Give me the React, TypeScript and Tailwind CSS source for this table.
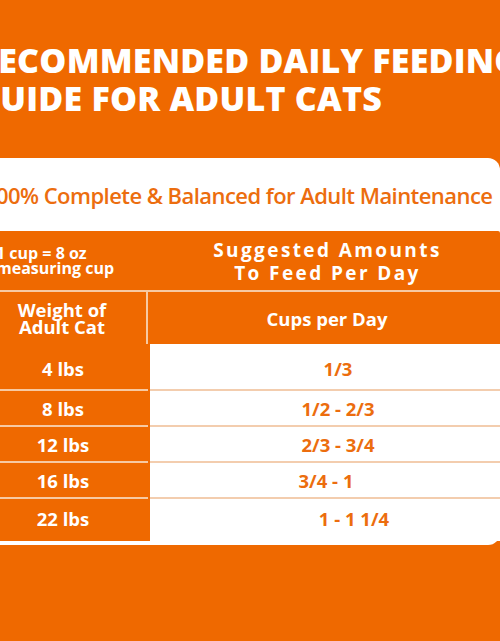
import React from "react";

const ORANGE = "bg-[#EF6900]";

const rows: { w: string; c: string; off: string; h: string; pad: string }[] = [
  { w: "4 lbs", c: "1/3", off: "pl-[26px]", h: "h-[45px]", pad: "pt-[5px]" },
  { w: "8 lbs", c: "1/2 - 2/3", off: "pl-[26px]", h: "h-[36px]", pad: "pt-[1px]" },
  { w: "12 lbs", c: "2/3 - 3/4", off: "pl-[26px]", h: "h-[36px]", pad: "pt-[1px]" },
  { w: "16 lbs", c: "3/4 - 1", off: "pl-[2px]", h: "h-[36px]", pad: "pt-[2px]" },
  { w: "22 lbs", c: "1 - 1 1/4", off: "pl-[58px]", h: "h-[44px]", pad: "pb-[2px]" },
];

export default function App() {
  return (
    <div
      className={`w-[500px] h-[641px] overflow-hidden ${ORANGE} flex flex-col`}
      style={{ fontFamily: '"Open Sans", "Liberation Sans", sans-serif' }}
    >
      <div className="pt-[41px] ml-[-25px] whitespace-nowrap text-white font-extrabold text-[34px] leading-[38px] tracking-[0.2px]">
        <div>RECOMMENDED DAILY FEEDING</div>
        <div>GUIDE FOR ADULT CATS</div>
      </div>

      <div className="mt-[41px] ml-[-20px] w-[520px] bg-white rounded-[12px] pb-[4px] flex flex-col">
        <div className="h-[73px] flex items-center whitespace-nowrap ml-[4px] pt-[2px] text-[#EC6D0E] font-semibold text-[22px] tracking-[-0.55px]">
          100% Complete &amp; Balanced for Adult Maintenance
        </div>
        <div className={`${ORANGE} rounded-r-[2px] flex flex-col`}>
          <div className="h-[61px] flex border-b-[2px] border-[#F7C9A2]">
            <div className="w-[169px] shrink-0 pl-[16px] pt-[15px] text-white font-bold text-[16px] leading-[15px] whitespace-nowrap">
              <div>1 cup = 8 oz</div>
              <div>measuring cup</div>
            </div>
            <div className="flex-1 flex flex-col items-center justify-center pl-[6px] pt-[2px] text-white font-bold text-[19px] leading-[23px] tracking-[2.4px] whitespace-nowrap">
              <div>Suggested Amounts</div>
              <div>To Feed Per Day</div>
            </div>
          </div>
          <div className="flex h-[52px]">
            <div className="w-[168px] shrink-0 border-r-[2px] border-[#F7C9A2] flex flex-col items-center justify-center pr-[2px] text-white font-bold text-[18.5px] leading-[17px]">
              <div>Weight of</div>
              <div>Adult Cat</div>
            </div>
            <div className="flex-1 flex items-center justify-center pl-[6px] pt-[1px] text-white font-bold text-[18.5px]">
              Cups per Day
            </div>
          </div>
          {rows.map((r, i) => (
            <div key={r.w} className={`flex ${r.h}`}>
              <div
                className={`w-[168px] shrink-0 flex items-center justify-center pr-[2px] ${r.pad} text-white font-bold text-[18.5px] ${
                  i > 0 ? "border-t-[2px] border-[#F7C9A2]" : ""
                }`}
              >
                {r.w}
              </div>
              <div
                className={`flex-1 bg-white ml-[2px] flex items-center justify-center ${r.off} ${r.pad} text-[#EC6D0E] font-bold text-[18.5px] ${
                  i > 0 ? "border-t-[2px] border-[#F3CDAE]" : ""
                }`}
              >
                {r.c}
              </div>
            </div>
          ))}
        </div>
      </div>
    </div>
  );
}
